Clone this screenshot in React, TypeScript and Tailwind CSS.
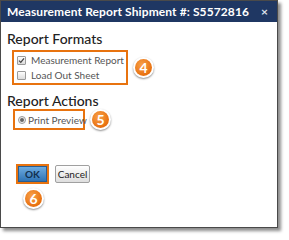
import React from "react";

function Badge({ n }: { n: string }) {
  return (
    <div className="w-[21px] h-[21px] shrink-0 rounded-full bg-white shadow-[0_1px_2px_rgba(0,0,0,0.45)] flex items-center justify-center">
      <div className="w-[17px] h-[17px] rounded-full bg-[radial-gradient(circle_at_40%_35%,#f7a14a,#e8700f_70%)] flex items-center justify-center text-white text-[14px] font-bold leading-none">
        {n}
      </div>
    </div>
  );
}

function CheckBox({ checked }: { checked?: boolean }) {
  return (
    <span className="w-[9px] h-[9px] shrink-0 border border-[#9a9a9a] rounded-[1px] bg-gradient-to-b from-[#fdfdfd] to-[#dcdcdc] flex items-center justify-center">
      {checked && (
        <svg width="7" height="7" viewBox="0 0 7 7">
          <path d="M1 3.6 L2.8 5.4 L6 1.4" fill="none" stroke="#444" strokeWidth="1.3" />
        </svg>
      )}
    </span>
  );
}

export default function App() {
  return (
    <div
      className="w-[289px] h-[240px] bg-white"
      style={{ fontFamily: "Lato, 'Open Sans', sans-serif" }}
    >
      <div className="w-[278px] h-[228px] border border-[#4a4a4a] bg-white shadow-[3px_3px_3px_rgba(0,0,0,0.45)] flex flex-col">
        {/* Title bar */}
        <div className="h-[21px] bg-[#1f3763] flex items-center justify-between pl-[6px] pr-[9px]">
          <span className="text-white text-[12px] font-bold leading-none tracking-[0.1px]">
            Measurement Report Shipment #: S5572816
          </span>
          <span className="text-[#dfe4ee] text-[12px] font-bold leading-none">×</span>
        </div>

        {/* Body */}
        <div className="flex flex-col pl-[6px] text-[#333]">
          <h2 className="mt-[9px] text-[14px] leading-[16px] font-medium text-[#222]">
            Report Formats
          </h2>
          <div className="mt-[3px] flex items-center gap-[5px]">
            <div className="ml-[5px] w-[116px] h-[35px] border-2 border-[#e8730f] flex flex-col justify-center gap-[5px] pl-[3px]">
              <label className="flex items-center gap-[5px] text-[10px] leading-[10px] text-[#555] whitespace-nowrap">
                <CheckBox checked />
                Measurement Report
              </label>
              <label className="flex items-center gap-[5px] text-[10px] leading-[10px] text-[#555] whitespace-nowrap">
                <CheckBox />
                Load Out Sheet
              </label>
            </div>
            <Badge n="4" />
          </div>

          <h2 className="mt-[8px] text-[14px] leading-[16px] font-medium text-[#222]">
            Report Actions
          </h2>
          <div className="flex items-center gap-[5px]">
            <div className="ml-[6px] w-[72px] h-[21px] border-2 border-[#e8730f] flex items-center gap-[2px] pl-[3px]">
              <span className="w-[8px] h-[8px] shrink-0 rounded-full border border-[#9a9a9a] bg-[#eee] flex items-center justify-center">
                <span className="w-[4px] h-[4px] rounded-full bg-[#666]" />
              </span>
              <span className="text-[10px] leading-[10px] text-[#555] whitespace-nowrap">
                Print Preview
              </span>
            </div>
            <Badge n="5" />
          </div>

          {/* Buttons */}
          <div className="mt-[34px] ml-[9px] flex items-center gap-[6px]">
            <div className="w-[33px] h-[20px] border-2 border-[#e8730f] flex">
              <button className="flex-1 bg-gradient-to-b from-[#6dabe0] to-[#2f74b5] border border-[#2a5d8f] text-[10px] font-bold text-[#12304f] leading-none">
                OK
              </button>
            </div>
            <button className="w-[35px] h-[18px] rounded-[2px] border border-[#a0a0a0] bg-gradient-to-b from-[#ffffff] to-[#dedede] text-[10px] text-[#222] leading-none">
              Cancel
            </button>
          </div>
          <div className="mt-[4px] ml-[16px]">
            <Badge n="6" />
          </div>
        </div>
      </div>
    </div>
  );
}
